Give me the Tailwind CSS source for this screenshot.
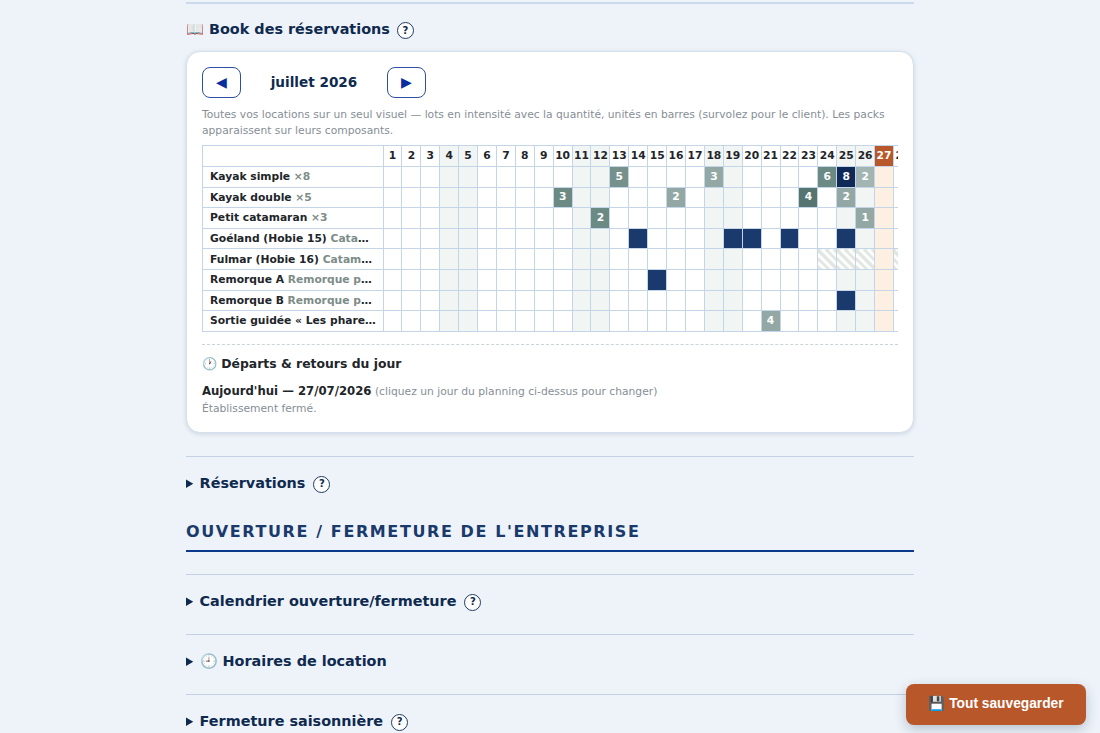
<!DOCTYPE html>
<html lang="fr">
<head>
  <meta charset="UTF-8">
  <title>Book des réservations</title>
  <script src="https://cdn.jsdelivr.net/npm/@tailwindcss/browser@4"></script>
</head>
<body class="bg-[#eef3f9] h-[733px] overflow-hidden font-['DejaVu_Sans',sans-serif] text-[#0f2a4f] relative">

  <main class="w-[728px] ml-[186px] pt-[2px]">
    <div class="h-[4px] border-t-2 border-[#ccd9ea]"></div>

    <!-- Book -->
    <h3 class="mt-[12px] h-[24px] flex items-center text-[14.4px] font-bold text-[#0f2a4f]">
      <span>📖 Book des réservations</span>
      <span class="ml-[7px] w-[17px] h-[17px] rounded-full border border-[#1f3a63] flex items-center justify-center text-[10px] font-bold bg-white">?</span>
    </h3>

    <section class="mt-[9px] h-[382px] bg-white rounded-[14px] border border-[#d5e0ed] shadow-[0_1px_4px_rgba(15,42,79,0.15)] px-[15px] pt-[15px]">
      <div class="flex items-center h-[31px]">
        <button class="w-[39px] h-[31px] rounded-[8px] border border-[#2f4fa5] text-[#0b2e9e] text-[14px] flex items-center justify-center">◀</button>
        <div class="w-[146px] text-center text-[13.6px] font-bold text-[#0f2a4f]">juillet 2026</div>
        <button class="w-[39px] h-[31px] rounded-[8px] border border-[#2f4fa5] text-[#0b2e9e] text-[14px] flex items-center justify-center">▶</button>
      </div>
      <p class="mt-[9px] text-[10.72px] leading-[16px] text-[#868e96]">Toutes vos locations sur un seul visuel — lots en intensité avec la quantité, unités en barres (survolez pour le client). Les packs apparaissent sur leurs composants.</p>

      <div class="mt-[6px] w-[696px] overflow-hidden">
        <table id="planning" class="border-collapse table-fixed w-[767px] text-[10.72px]">
          <tbody id="rows"></tbody>
        </table>
      </div>

      <div class="mt-[12px] border-t border-dashed border-[#ccd3da] pt-[10px]">
        <h4 class="text-[12.4px] leading-[18px] font-bold text-[#212529]">🕐 Départs &amp; retours du jour</h4>
        <p class="mt-[9px] text-[10.72px] leading-[18px] text-[#868e96]"><strong class="text-[11.7px] text-[#212529]">Aujourd'hui — 27/07/2026</strong> (cliquez un jour du planning ci-dessus pour changer)</p>
        <p class="text-[10.72px] leading-[16px] text-[#868e96]">Établissement fermé.</p>
      </div>
    </section>

    <!-- Réservations -->
    <div class="mt-[23px] border-t border-[#c3d1e2]"></div>
    <details class="mt-[14px]">
      <summary class="h-[24px] leading-[24px] text-[14.4px] font-bold marker:text-[12.8px]">Réservations <span class="ml-[3px] inline-flex align-middle w-[17px] h-[17px] rounded-full border border-[#1f3a63] items-center justify-center text-[10px] leading-none font-bold bg-white">?</span></summary>
    </details>

    <h2 class="mt-[25px] pb-[6px] border-b-2 border-[#0b3a8c] text-[16px] leading-[24px] font-bold tracking-[1.6px] text-[#1a3a6b]">OUVERTURE / FERMETURE DE L'ENTREPRISE</h2>

    <div class="mt-[22px] border-t border-[#c3d1e2]"></div>
    <details class="mt-[14px]">
      <summary class="h-[24px] leading-[24px] text-[14.4px] font-bold marker:text-[12.8px]">Calendrier ouverture/fermeture <span class="ml-[3px] inline-flex align-middle w-[17px] h-[17px] rounded-full border border-[#1f3a63] items-center justify-center text-[10px] leading-none font-bold bg-white">?</span></summary>
    </details>

    <div class="mt-[21px] border-t border-[#c3d1e2]"></div>
    <details class="mt-[14px]">
      <summary class="h-[24px] leading-[24px] text-[14.4px] font-bold marker:text-[12.8px]">🕘 Horaires de location</summary>
    </details>

    <div class="mt-[21px] border-t border-[#c3d1e2]"></div>
    <details class="mt-[14px]">
      <summary class="h-[24px] leading-[24px] text-[14.4px] font-bold marker:text-[12.8px]">Fermeture saisonnière <span class="ml-[3px] inline-flex align-middle w-[17px] h-[17px] rounded-full border border-[#1f3a63] items-center justify-center text-[10px] leading-none font-bold bg-white">?</span></summary>
    </details>
  </main>

  <button class="absolute left-[906px] top-[684px] w-[180px] h-[41px] rounded-[8px] bg-[#b8572a] text-white text-[13.76px] font-bold font-['Liberation_Sans',sans-serif] shadow-[0_4px_12px_rgba(15,42,79,0.25)]">💾 Tout sauvegarder</button>

  <script>
    // planning: [nom, detail, { jour: [type, quantite] }]
    const items = [
      ['Kayak simple', ' ×8', {13:['b','5'],18:['c','3'],24:['a','6'],25:['n','8'],26:['d','2']}],
      ['Kayak double', ' ×5', {10:['a','3'],16:['c','2'],23:['e','4'],25:['c','2']}],
      ['Petit catamaran', ' ×3', {12:['a','2'],26:['c','1']}],
      ['Goéland (Hobie 15)', ' Catamaran', {14:['u',''],19:['u',''],20:['u',''],22:['u',''],25:['u','']}],
      ['Fulmar (Hobie 16)', ' Catamaran', {24:['h',''],25:['h',''],26:['h',''],28:['h','']}],
      ['Remorque A', ' Remorque porte', {15:['u','']}],
      ['Remorque B', ' Remorque porte', {25:['u','']}],
      ['Sortie guidée « Les phares »', '', {21:['c','4']}],
    ];
    const fills = {
      a: 'bg-[#6b8a83] text-white',
      b: 'bg-[#76918c] text-white',
      c: 'bg-[#93a8a4] text-white',
      d: 'bg-[#a3b5b2] text-white',
      e: 'bg-[#567570] text-white',
      n: 'bg-[#0f2a57] text-white',
      u: 'bg-[#1a3a6e]',
      h: 'bg-[repeating-linear-gradient(45deg,#e0e7e3_0,#e0e7e3_3px,#ffffff_3px,#ffffff_6px)]',
    };
    const weekend = [4, 5, 11, 12, 18, 19, 25, 26];
    const border = 'border border-[#c5d5e8]';
    let html = '<tr class="h-[21px]"><td class="' + border + ' w-[180.5px]"></td>';
    for (let d = 1; d <= 31; d++) {
      let c = 'text-[#212529]';
      if (weekend.includes(d)) c = 'bg-[#f1f5f3] text-[#212529]';
      if (d === 27) c = 'bg-[#b8572a] text-white';
      html += '<td class="' + border + ' w-[18.92px] p-0 text-center font-bold ' + c + '">' + d + '</td>';
    }
    html += '</tr>';
    items.forEach(([name, detail, days]) => {
      html += '<tr class="h-[20.6px]"><td class="' + border + ' pl-[7px] pr-[6px] pt-[1px] font-bold text-[#212529] whitespace-nowrap overflow-hidden text-ellipsis">' + name + '<span class="text-[#7d8c88]">' + detail + '</span></td>';
      for (let d = 1; d <= 31; d++) {
        let c = '';
        if (weekend.includes(d)) c = 'bg-[#f1f5f3]';
        if (d === 27) c = 'bg-[#fdf0e2]';
        let txt = '';
        if (days[d]) { c = fills[days[d][0]]; txt = days[d][1]; }
        html += '<td class="' + border + ' p-0 text-center font-bold ' + c + '">' + txt + '</td>';
      }
      html += '</tr>';
    });
    document.getElementById('rows').innerHTML = html;
  </script>
</body>
</html>
